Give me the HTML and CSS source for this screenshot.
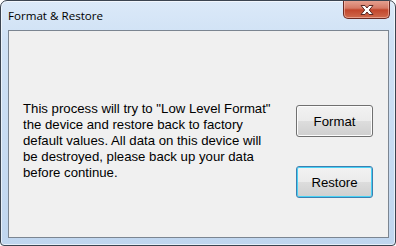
FILE: index.html
```html
<!DOCTYPE html>
<html>
<head>
<meta charset="utf-8">
<link rel="stylesheet" href="styles.css">
</head>
<body>
<div class="window">
  <div class="titlebar">
    <span class="title">Format &amp; Restore</span>
    <div class="close">
      <svg width="16" height="12" viewBox="0 0 16 12">
        <path d="M2 1.5 H6 L8 4 L10 1.5 H14 L10.3 6 L14 10.5 H10 L8 8 L6 10.5 H2 L5.7 6 Z" fill="#fff" stroke="#5a2a25" stroke-width="1" stroke-linejoin="round"/>
      </svg>
    </div>
  </div>
  <div class="client">
    <p class="message">This process will try to "Low Level Format" the device and restore back to factory default values. All data on this device will be destroyed, please back up your data before continue.</p>
    <div class="buttons">
      <button class="btn">Format</button>
      <button class="btn focused">Restore</button>
    </div>
  </div>
</div>
</body>
</html>
```
FILE: styles.css
```css
html, body {
  margin: 0;
  padding: 0;
  background: #ffffff;
}
.window {
  box-sizing: border-box;
  width: 396px;
  height: 246px;
  border: 1px solid #3b4450;
  border-radius: 7px 7px 4px 4px;
  background: linear-gradient(180deg, #dbe9f8 0px, #cfe1f5 40px, #c0d6ef 100%);
  display: flex;
  flex-direction: column;
  overflow: hidden;
  box-shadow: inset 0 0 0 1px rgba(255,255,255,0.6);
}
.titlebar {
  height: 29px;
  flex: 0 0 29px;
  display: flex;
  justify-content: space-between;
  align-items: flex-start;
}
.title {
  font-family: "Open Sans", "Noto Sans", sans-serif;
  font-size: 11.6px;
  color: #000;
  margin: 7px 0 0 7px;
}
.close {
  box-sizing: border-box;
  width: 47px;
  height: 19px;
  margin: -1px 5px 0 0;
  border: 1px solid #6b2a22;
  border-top: none;
  border-radius: 0 0 5px 5px;
  background: linear-gradient(180deg, #e7a595 0%, #d67a66 45%, #c2462c 55%, #cf6a4d 100%);
  box-shadow: inset 0 0 0 1px rgba(255,210,200,0.5);
  display: flex;
  align-items: center;
  justify-content: center;
}
.close svg {
  display: block;
  margin-top: 1px;
}
.client {
  flex: 1;
  margin: 0 6px 7px 7px;
  border: 1px solid #7b8591;
  background: #f0f0f0;
  display: flex;
  align-items: flex-start;
  padding: 0 15px 0 14px;
}
.message {
  margin: 70px 0 0 0;
  width: 250px;
  font-family: "Liberation Sans", Arial, sans-serif;
  font-size: 13.2px;
  line-height: 16px;
  color: #000;
}
.buttons {
  margin: 74px 0 0 auto;
  display: flex;
  flex-direction: column;
  gap: 29px;
}
.btn {
  box-sizing: border-box;
  width: 77px;
  height: 32px;
  border: 1px solid #707070;
  border-radius: 3px;
  background: linear-gradient(180deg, #f2f2f2 0%, #ebebeb 49%, #dddddd 50%, #cfcfcf 100%);
  box-shadow: inset 0 0 0 1px #fcfcfc;
  font-family: "Liberation Sans", Arial, sans-serif;
  font-size: 13.2px;
  color: #000;
  padding: 0;
}
.btn.focused {
  border-color: #3c7fb1;
  box-shadow: inset 0 0 0 1px #48d2f5;
}
```
